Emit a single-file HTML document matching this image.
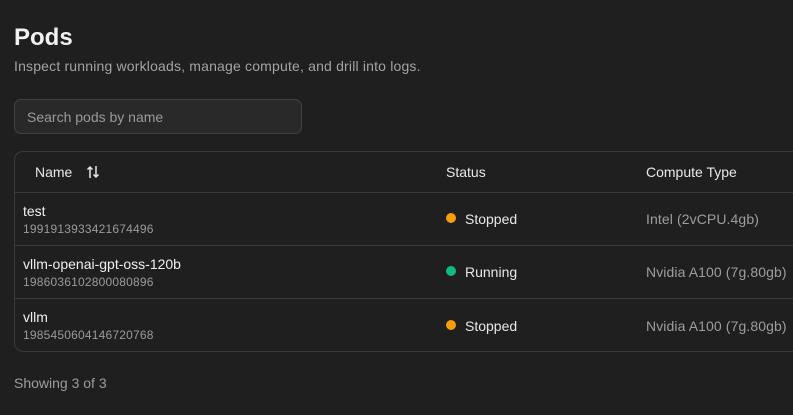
<!DOCTYPE html>
<html><head><style>
body{margin:0;background:#1f1f1f;width:793px;height:415px;overflow:hidden;font-family:"Liberation Sans",sans-serif;color:#ededed;position:relative}
.a{position:absolute;white-space:nowrap}
h1{position:absolute;left:14px;top:24px;margin:0;font-size:24px;font-weight:700;color:#f2f2f2}
.sub{left:14px;top:58px;font-size:14px;color:#a3a3a3;letter-spacing:0.18px}
.search{position:absolute;left:14px;top:99px;width:288px;height:35px;border:1px solid #414141;border-radius:7px;background:#292929;box-sizing:border-box}
.search span{position:absolute;left:12px;top:9px;font-size:14px;color:#9a9a9a}
.tbl{position:absolute;left:14px;top:151px;width:800px;height:201px;border:1px solid #393939;border-radius:9px;box-sizing:border-box}
.line{position:absolute;left:15px;width:780px;height:1px;background:#393939}
.h{font-size:14px;color:#e8e8e8;top:164px}
.n{font-size:14px;color:#efefef;left:23px}
.id{font-size:12px;color:#9b9b9b;left:23px;letter-spacing:0.2px}
.st{font-size:14px;color:#e8e8e8;left:465px}
.dot{position:absolute;left:446px;width:10px;height:10px;border-radius:50%}
.c{font-size:14px;color:#9d9d9d;left:646px;letter-spacing:0.1px}
</style></head><body>
<h1>Pods</h1>
<div class="a sub">Inspect running workloads, manage compute, and drill into logs.</div>
<div class="search"><span>Search pods by name</span></div>
<div class="tbl"></div>
<div class="a h" style="left:35px">Name</div>
<svg class="a" style="left:86px;top:165px" width="14" height="14" viewBox="0 0 14 14" fill="none" stroke="#e8e8e8" stroke-width="1.5"><path d="M4 13V2M1.5 4.5L4 2l2.5 2.5M10 1v11M7.5 9.5L10 12l2.5-2.5"/></svg>
<div class="a h" style="left:446px">Status</div>
<div class="a h" style="left:646px">Compute Type</div>
<div class="line" style="top:192px"></div>
<div class="line" style="top:245px"></div>
<div class="line" style="top:298px"></div>

<div class="a n" style="top:203px">test</div>
<div class="a id" style="top:222px">1991913933421674496</div>
<div class="dot" style="top:213px;background:#f59e0b"></div>
<div class="a st" style="top:211px">Stopped</div>
<div class="a c" style="top:211px">Intel (2vCPU.4gb)</div>

<div class="a n" style="top:256px">vllm-openai-gpt-oss-120b</div>
<div class="a id" style="top:275px">1986036102800080896</div>
<div class="dot" style="top:266px;background:#10b981"></div>
<div class="a st" style="top:264px">Running</div>
<div class="a c" style="top:264px">Nvidia A100 (7g.80gb)</div>

<div class="a n" style="top:309px">vllm</div>
<div class="a id" style="top:328px">1985450604146720768</div>
<div class="dot" style="top:320px;background:#f59e0b"></div>
<div class="a st" style="top:318px">Stopped</div>
<div class="a c" style="top:318px">Nvidia A100 (7g.80gb)</div>

<div class="a" style="left:14px;top:375px;font-size:14px;color:#9d9d9d">Showing 3 of 3</div>
</body></html>
